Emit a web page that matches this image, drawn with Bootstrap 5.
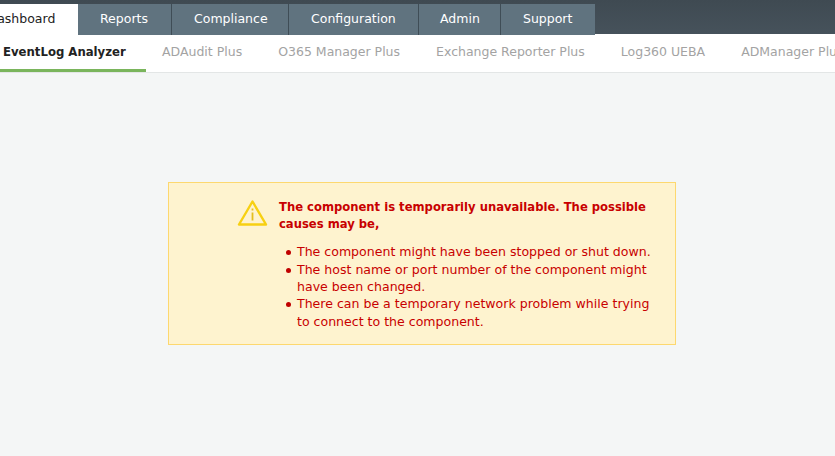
<!DOCTYPE html>
<html lang="en"><head><meta charset="utf-8"><title>Log360</title>
<link href="https://cdn.jsdelivr.net/npm/bootstrap@5.3.0/dist/css/bootstrap.min.css" rel="stylesheet">
<style>
html,body{height:100%;overflow:hidden}
body{background:#f4f6f6;font-family:"DejaVu Sans",sans-serif;font-size:12.55px;width:835px}
.topbar{height:34px;background:linear-gradient(#3f4a52,#46525b);padding-top:4px;position:relative;z-index:2}
.tabrow{margin-left:-34px}
.tabitem{height:31px;line-height:30px;background:#60737f;color:#fff;padding:0 0 0 21px;border-right:1px solid #3f4d56;white-space:nowrap;text-decoration:none;font-size:12.5px;flex:none}
.tabitem.active-tab{background:#fff;color:#222;border-right:0;width:112px;padding-left:21.5px}
.tabitem.tab-reports{width:94px;padding-left:22px}
.tabitem.tab-compliance{width:117px;padding-left:22px}
.tabitem.tab-configuration{width:130px;padding-left:22px}
.tabitem.tab-admin{width:82px}
.tabitem.last-tab{border-right:0;width:94px;padding-left:22px}
.subbar{height:39px;background:#fff;border-bottom:1px solid #e3e6e6;overflow:hidden;white-space:nowrap;padding-top:1px}
.subitem{height:37px;line-height:34px;color:#a3a3a3;padding:0 18px;text-decoration:none;font-size:12.5px;flex:none}
.subitem.active-sub{color:#222;font-weight:700;width:146px;margin-right:-2px;padding:0 0 0 3px;border-bottom:3px solid #7ab55c;height:37px;font-size:11.7px}
.msgwrap{padding-top:109px}
.msgbox{width:508px;height:163px;margin-left:168px;background:#fef3cf;border:1px solid #fdd86f;color:#c80000;padding:16px 20px 0 69px;position:relative}
.msgtitle{font-weight:700;margin:0 0 10.4px 41px;line-height:17px;font-size:11.6px;width:375px}
.msglist{margin:0 0 0 59px;padding:0;list-style:none;width:358px}
.msglist li{position:relative;line-height:17.3px}
.msglist li::before{content:"";position:absolute;left:-11px;top:7px;width:5px;height:5px;border-radius:50%;background:#c00000}
.warnicon{position:absolute;left:68px;top:16px}
</style></head>
<body>
<div class="topbar"><nav class="d-flex tabrow">
<a class="tabitem active-tab" href="#">Dashboard</a><a class="tabitem tab-reports" href="#">Reports</a><a class="tabitem tab-compliance" href="#">Compliance</a><a class="tabitem tab-configuration" href="#">Configuration</a><a class="tabitem tab-admin" href="#">Admin</a><a class="tabitem last-tab" href="#">Support</a>
</nav></div>
<div class="subbar d-flex">
<a class="subitem active-sub" href="#">EventLog Analyzer</a><a class="subitem" href="#">ADAudit Plus</a><a class="subitem" href="#">O365 Manager Plus</a><a class="subitem" href="#">Exchange Reporter Plus</a><a class="subitem" href="#">Log360 UEBA</a><a class="subitem" href="#">ADManager Plus</a>
</div>
<main class="msgwrap">
<div class="msgbox">
<svg class="warnicon" width="32" height="30" viewBox="0 0 32 30" aria-hidden="true"><path d="M15.5 2.5 2 25.5h27z" fill="none" stroke="#f7d012" stroke-width="2.4" stroke-linejoin="round"/><rect x="14.6" y="9.5" width="1.8" height="2" fill="#e3bd20"/><rect x="14.6" y="13.5" width="1.8" height="8" fill="#e3bd20"/></svg>
<p class="msgtitle">The component is temporarily unavailable. The possible causes may be,</p>
<ul class="msglist">
<li>The component might have been stopped or shut down.</li>
<li>The host name or port number of the component might have been changed.</li>
<li>There can be a temporary network problem while trying to connect to the component.</li>
</ul>
</div>
</main>
</body></html>
